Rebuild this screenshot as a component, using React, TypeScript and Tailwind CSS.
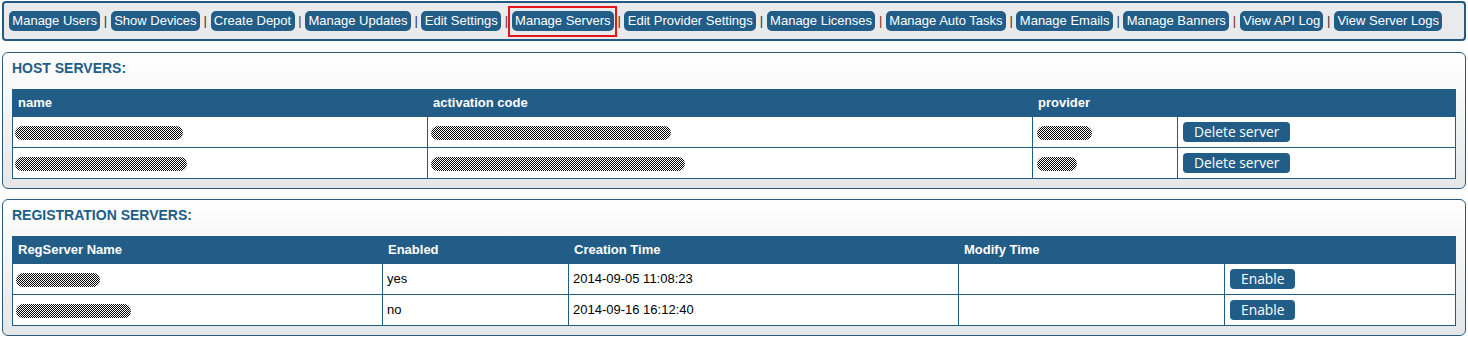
import { Fragment } from "react";

interface NavItem {
  label: string;
  sepColor: string;
  active?: boolean;
}

const navItems: NavItem[] = [
  { label: "Manage Users", sepColor: "text-[#2b3440]" },
  { label: "Show Devices", sepColor: "text-[#2b3440]" },
  { label: "Create Depot", sepColor: "text-[#7a2a1c]" },
  { label: "Manage Updates", sepColor: "text-[#2b3440]" },
  { label: "Edit Settings", sepColor: "text-[#7a2a1c]" },
  { label: "Manage Servers", sepColor: "text-[#2b3440]", active: true },
  { label: "Edit Provider Settings", sepColor: "text-[#2b3440]" },
  { label: "Manage Licenses", sepColor: "text-[#7a2a1c]" },
  { label: "Manage Auto Tasks", sepColor: "text-[#2b3440]" },
  { label: "Manage Emails", sepColor: "text-[#2b3440]" },
  { label: "Manage Banners", sepColor: "text-[#7a2a1c]" },
  { label: "View API Log", sepColor: "text-[#2b3440]" },
  { label: "View Server Logs", sepColor: "" },
];

// redacted values are drawn as checkered pills, like in the screenshot
const Blob = ({ width }: { width: string }) => (
  <span
    className={`inline-block h-[14px] align-middle rounded-full bg-[repeating-conic-gradient(#000_0%_25%,#fff_0%_50%)] bg-[length:2px_2px] ${width}`}
  />
);

const ActionButton = ({ label }: { label: string }) => (
  <button
    type="button"
    className="h-[20px] px-[11px] rounded-[4px] bg-[#225d88] text-white text-[13.8px] leading-[20px] font-['Open_Sans',sans-serif]"
  >
    {label}
  </button>
);

const Panel = ({ title, children }: { title: string; children: React.ReactNode }) => (
  <div className="border border-[#2a5a80] rounded-[6px] bg-linear-to-b from-white to-[#e5e6e8] px-[9px] pt-[7px] pb-[9px]">
    <h2 className="text-[14px] leading-[17px] font-bold text-[#225d88]">{title}</h2>
    <div className="mt-3">{children}</div>
  </div>
);

const th = "h-[27px] px-[5px] text-left text-[13px] font-bold text-white border border-[#225d88]";
const td = "h-[31px] px-1 text-[13px] text-black border border-[#225d88] bg-white";

const hostRows = [
  { name: "w-[168px]", code: "w-[240px]", provider: "w-[55px]" },
  { name: "w-[172px]", code: "w-[254px]", provider: "w-[40px]" },
];

const regRows = [
  { name: "w-[84px]", enabled: "yes", created: "2014-09-05 11:08:23" },
  { name: "w-[115px]", enabled: "no", created: "2014-09-16 16:12:40" },
];

export default function App() {
  return (
    <div className="mx-[2px] font-['Liberation_Sans',Arial,sans-serif]">
      <div className="mt-px h-[40px] border-2 border-[#235a84] rounded-[4px] bg-[#e9eaeb] flex items-center pl-[5px] text-[13px] whitespace-pre">
        {navItems.map((item) => (
          <Fragment key={item.label}>
            <span className="relative h-[20px] leading-[20px] px-[3.35px] rounded-[5px] bg-[#225d88] text-white">
              {item.label}
              {item.active && (
                <span className="absolute -left-[4px] -right-[3px] -top-[5px] -bottom-[6px] border-2 border-[#e3171b]" />
              )}
            </span>
            {item.sepColor && <span className={item.sepColor}>{" | "}</span>}
          </Fragment>
        ))}
      </div>

      <div className="mt-[11px]">
        <Panel title="HOST SERVERS:">
          <table className="w-full table-fixed border-collapse">
            <colgroup>
              <col className="w-[415px]" />
              <col className="w-[605px]" />
              <col className="w-[145px]" />
              <col />
            </colgroup>
            <thead className="bg-[#225d88]">
              <tr>
                <th className={th}>name</th>
                <th className={th}>activation code</th>
                <th className={th}>provider</th>
                <th className={th}></th>
              </tr>
            </thead>
            <tbody>
              {hostRows.map((row, i) => (
                <tr key={i}>
                  <td className={`${td} pl-[2px]`}>
                    <Blob width={row.name} />
                  </td>
                  <td className={`${td} pl-[3px]`}>
                    <Blob width={row.code} />
                  </td>
                  <td className={td}>
                    <Blob width={row.provider} />
                  </td>
                  <td className={`${td} pl-[5px]`}>
                    <ActionButton label="Delete server" />
                  </td>
                </tr>
              ))}
            </tbody>
          </table>
        </Panel>
      </div>

      <div className="mt-[10px]">
        <Panel title="REGISTRATION SERVERS:">
          <table className="w-full table-fixed border-collapse">
            <colgroup>
              <col className="w-[370px]" />
              <col className="w-[186px]" />
              <col className="w-[390px]" />
              <col className="w-[266px]" />
              <col />
            </colgroup>
            <thead className="bg-[#225d88]">
              <tr>
                <th className={th}>RegServer Name</th>
                <th className={th}>Enabled</th>
                <th className={th}>Creation Time</th>
                <th className={th}>Modify Time</th>
                <th className={th}></th>
              </tr>
            </thead>
            <tbody>
              {regRows.map((row, i) => (
                <tr key={i}>
                  <td className={`${td} pl-[3px]`}>
                    <Blob width={row.name} />
                  </td>
                  <td className={td}>{row.enabled}</td>
                  <td className={td}>{row.created}</td>
                  <td className={td}></td>
                  <td className={`${td} pl-[5px]`}>
                    <ActionButton label="Enable" />
                  </td>
                </tr>
              ))}
            </tbody>
          </table>
        </Panel>
      </div>
    </div>
  );
}
